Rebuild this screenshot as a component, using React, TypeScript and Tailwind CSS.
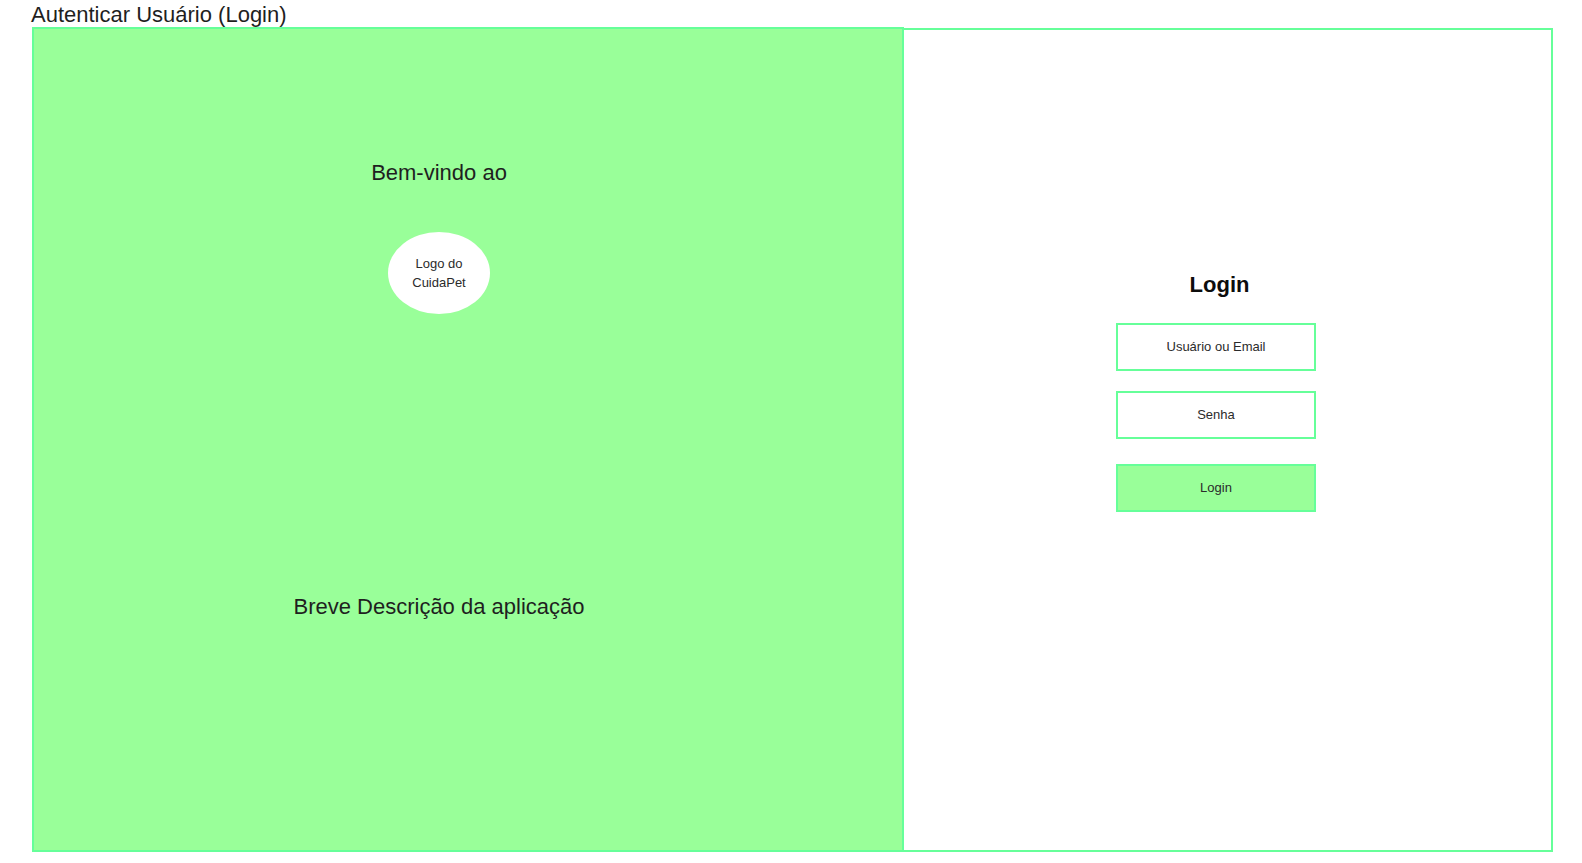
export default function App() {
  return (
    <div className="h-[863px] w-[1582px] overflow-hidden bg-white pl-[32px] text-[#1f1f1f] font-['Liberation_Sans',Arial,sans-serif]">
      <h1 className="h-[28px] -ml-px text-[22px] leading-[29px] font-normal">Autenticar Usuário (Login)</h1>
      <div className="flex h-[824px] w-[1521px] border-2 border-[#66ff99]">
        <section className="-mt-[3px] -ml-[2px] -mb-[2px] flex w-[872px] shrink-0 flex-col items-center border-2 border-[#66ff99] bg-[#99ff99] pr-[58px]">
          <h2 className="mt-[130px] text-[22px] leading-[28px] font-normal">Bem-vindo ao</h2>
          <div className="mt-[45px] flex h-[82px] w-[102px] items-center justify-center rounded-[50%] bg-white text-center text-[13px] leading-[19px] text-[#2b2b2b]">
            Logo do<br />CuidaPet
          </div>
          <p className="mt-[279px] text-[22px] leading-[28px]">Breve Descrição da aplicação</p>
        </section>
        <section className="flex flex-1 flex-col items-center pt-[241px] pr-[23px] text-[#2b2b2b]">
          <h2 className="ml-[7px] text-[22px] leading-[28px] font-bold text-[#0d0d0d]">Login</h2>
          <div className="mt-[24px] flex h-[48px] w-[200px] items-center justify-center border-2 border-[#66ff99] text-[13px]">Usuário ou Email</div>
          <div className="mt-[20px] flex h-[48px] w-[200px] items-center justify-center border-2 border-[#66ff99] text-[13px]">Senha</div>
          <button className="mt-[25px] flex h-[48px] w-[200px] items-center justify-center border-2 border-[#66ff99] bg-[#99ff99] text-[13px]">Login</button>
        </section>
      </div>
    </div>
  );
}
